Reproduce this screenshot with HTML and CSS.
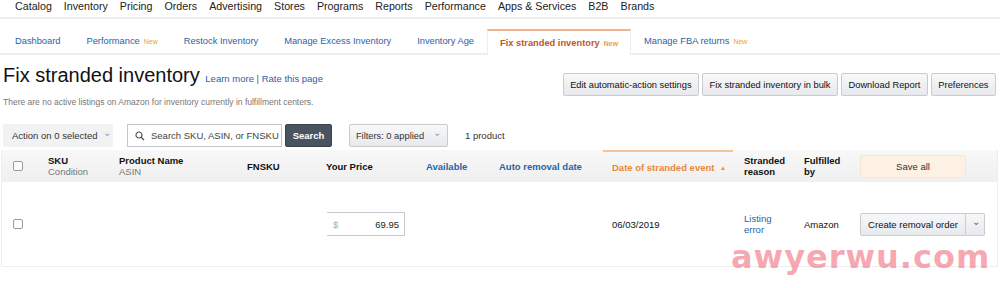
FILE: index.html
```html
<!DOCTYPE html>
<html lang="en">
<head>
  <meta charset="UTF-8">
  <title>Fix stranded inventory</title>
  <link rel="stylesheet" href="styles.css">
</head>
<body>
  <!-- top nav -->
  <nav class="topnav">
    <a>Catalog</a><a>Inventory</a><a>Pricing</a><a>Orders</a><a>Advertising</a><a>Stores</a>
    <a>Programs</a><a>Reports</a><a>Performance</a><a>Apps &amp; Services</a><a>B2B</a><a>Brands</a>
  </nav>

  <!-- tabs -->
  <div class="tabs">
    <a class="tab">Dashboard</a>
    <a class="tab">Performance <span class="new">New</span></a>
    <a class="tab">Restock Inventory</a>
    <a class="tab">Manage Excess Inventory</a>
    <a class="tab">Inventory Age</a>
    <a class="tab active">Fix stranded inventory <span class="new">New</span></a>
    <a class="tab">Manage FBA returns <span class="new">New</span></a>
  </div>

  <!-- header -->
  <div class="head">
    <div class="head-left">
      <h1>Fix stranded inventory <span class="links"><a>Learn more</a> | <a>Rate this page</a></span></h1>
      <p class="note">There are no active listings on Amazon for inventory currently in fulfillment centers.</p>
    </div>
    <div class="head-buttons">
      <button class="btn">Edit automatic-action settings</button>
      <button class="btn">Fix stranded inventory in bulk</button>
      <button class="btn">Download Report</button>
      <button class="btn">Preferences</button>
    </div>
  </div>

  <!-- toolbar -->
  <div class="toolbar">
    <div class="action">Action on 0 selected <span class="chev">&#8964;</span></div>
    <div class="search">
      <svg width="10" height="10" viewBox="0 0 10 10"><circle cx="4" cy="4" r="3" fill="none" stroke="#555" stroke-width="1.2"/><path d="M6.2 6.2 9 9" stroke="#555" stroke-width="1.3"/></svg>
      <span>Search SKU, ASIN, or FNSKU</span>
    </div>
    <button class="btn-search">Search</button>
    <button class="btn filters">Filters: 0 applied <span class="chev">&#8964;</span></button>
    <span class="count">1 product</span>
  </div>

  <!-- table -->
  <div class="table">
    <div class="row thead">
      <div class="c c-check"><span class="box"></span></div>
      <div class="c c-sku"><b>SKU</b><span class="sub">Condition</span></div>
      <div class="c c-name"><b>Product Name</b><span class="sub">ASIN</span></div>
      <div class="c c-fnsku"><b>FNSKU</b></div>
      <div class="c c-price"><b>Your Price</b></div>
      <div class="c c-avail"><b class="blue">Available</b></div>
      <div class="c c-auto"><b class="blue">Auto removal date</b></div>
      <div class="c c-date sorted"><b class="orange">Date of stranded event <span class="arrow">&#9650;</span></b></div>
      <div class="c c-reason"><b>Stranded reason</b></div>
      <div class="c c-ful"><b>Fulfilled by</b></div>
      <div class="c c-act"><button class="save">Save all</button></div>
    </div>
    <div class="row tbody">
      <div class="c c-check"><span class="box"></span></div>
      <div class="c c-sku"></div>
      <div class="c c-name"></div>
      <div class="c c-fnsku"></div>
      <div class="c c-price"><div class="price"><span class="cur">$</span><span>69.95</span></div></div>
      <div class="c c-avail"></div>
      <div class="c c-auto"></div>
      <div class="c c-date">06/03/2019</div>
      <div class="c c-reason"><a class="link">Listing error</a></div>
      <div class="c c-ful">Amazon</div>
      <div class="c c-act">
        <div class="split"><button class="split-main">Create removal order</button><button class="split-drop"><span class="chev">&#8964;</span></button></div>
      </div>
    </div>
  </div>

  <div class="watermark">awyerwu.com</div>
</body>
</html>
```

FILE: styles.css
```css
/* base */
body {
  margin: 0;
  font-family: "Liberation Sans", Arial, sans-serif;
  color: #111;
  background: #fff;
  width: 1000px;
  height: 288px;
  overflow: hidden;
  position: relative;
}

a {
  cursor: pointer;
}

/* top nav */
.topnav {
  display: flex;
  gap: 12px;
  padding-left: 15px;
  height: 17px;
  align-items: flex-start;
  font-size: 10.7px;
  line-height: 12px;
  color: #222;
  border-bottom: 2px solid #eee;
}

/* tabs */
.tabs {
  display: flex;
  margin-top: 10px;
  padding-left: 2px;
  height: 24px;
  border-bottom: 2px solid #eee;
  font-size: 9.3px;
  color: #2a62a8;
}

.tab {
  display: flex;
  align-items: center;
  padding: 0 13px;
  gap: 4px;
  white-space: nowrap;
}

.tab .new {
  color: #f0a030;
  font-size: 7px;
}

.tab.active {
  color: #c4561a;
  font-weight: bold;
  border-top: 2px solid #f0b48a;
  border-left: 1px solid #eee;
  border-right: 1px solid #eee;
  background: #fff;
  margin-bottom: -2px;
  height: 24px;
  padding: 0 12px 0 12px;
}

/* header */
.head {
  display: flex;
  justify-content: space-between;
  padding: 8px 4px 0 3px;
}

h1 {
  margin: 0;
  font-weight: normal;
  font-size: 20px;
  line-height: 24px;
  color: #111;
}

.links {
  font-size: 9.5px;
  color: #555;
}

.links a {
  color: #2a62a8;
}

.note {
  margin: 6px 0 0;
  font-size: 8.5px;
  color: #777;
}

.head-buttons {
  display: flex;
  gap: 3px;
  margin-top: 10px;
}

.btn {
  font-family: inherit;
  font-size: 9.3px;
  color: #111;
  background: linear-gradient(#f7f8fa, #e7e9ec);
  border: 1px solid #c9cbcf;
  border-radius: 2px;
  height: 23px;
  padding: 0 6.5px;
  margin: 0;
  white-space: nowrap;
}

/* toolbar */
.toolbar {
  display: flex;
  align-items: center;
  padding: 17px 0 0 3px;
  height: 23px;
}

.action {
  width: 110px;
  height: 23px;
  box-sizing: border-box;
  background: #f1f2f3;
  border-radius: 2px;
  font-size: 9.5px;
  color: #333;
  display: flex;
  align-items: center;
  padding-left: 9px;
  gap: 5px;
}

.chev {
  color: #999;
  font-size: 10px;
  position: relative;
  top: -3px;
}

.search {
  margin-left: 14px;
  width: 155px;
  height: 23px;
  box-sizing: border-box;
  border: 1px solid #c3c5c8;
  display: flex;
  align-items: center;
  gap: 6px;
  padding-left: 7px;
  font-size: 9.5px;
  color: #444;
}

.btn-search {
  margin-left: 3px;
  height: 23px;
  width: 47px;
  background: #4a5360;
  color: #fff;
  border: 1px solid #3a424d;
  border-radius: 2px;
  font-family: inherit;
  font-weight: bold;
  font-size: 9.5px;
}

.filters {
  margin-left: 17px;
  width: 99px;
  color: #333;
  display: flex;
  align-items: center;
  justify-content: center;
  gap: 9px;
}

.count {
  margin-left: 17px;
  font-size: 9.5px;
  color: #333;
}

/* table */
.table {
  margin: 3px 2px 0 1px;
  border: 1px solid #eee;
  border-top: none;
}

.row {
  display: flex;
  align-items: center;
}

.thead {
  height: 32px;
  background: linear-gradient(#f8f8f8, #efefef);
  font-size: 9.5px;
  color: #111;
}

.tbody {
  height: 84px;
  font-size: 9.5px;
  color: #111;
}

.c {
  box-sizing: border-box;
  display: flex;
  flex-direction: column;
  justify-content: center;
  height: 100%;
}

.c b {
  font-weight: bold;
}

.c .sub {
  color: #777;
}

.c-check { width: 46px; padding-left: 11px; }
.c-sku { width: 71px; }
.c-name { width: 128px; }
.c-fnsku { width: 79px; }
.c-price { width: 100px; }
.c-avail { width: 73px; }
.c-auto { width: 104px; }
.c-date { width: 130px; padding-left: 9px; }
.c-reason { width: 71px; padding-left: 11px; }
.c-ful { width: 56px; }
.c-act { flex: 1; }

.thead .c-reason b, .thead .c-ful b { width: 45px; }

.sorted {
  border-top: 2px solid #f3c59a;
}

.blue { color: #2a62a8; }
.orange { color: #e8893a; }

.arrow {
  font-size: 6px;
  margin-left: 3px;
  position: relative;
  top: -1px;
}

.box {
  width: 8px;
  height: 8px;
  border: 1px solid #999;
  border-radius: 2px;
  background: #fff;
}

.save {
  width: 106px;
  height: 23px;
  background: #fcf1e3;
  border: 1px solid #f6e6d0;
  border-radius: 2px;
  font-family: inherit;
  font-size: 9.5px;
  color: #333;
}

.price {
  width: 78px;
  height: 24px;
  box-sizing: border-box;
  border: 1px solid #c8cacd;
  border-left: none;
  display: flex;
  align-items: center;
  justify-content: space-between;
  padding: 0 5px 0 6px;
  margin-left: 1px;
  font-size: 9.5px;
  color: #222;
}

.cur { color: #aaa; }

.link {
  color: #2a62a8;
  width: 35px;
}

.split {
  display: flex;
}

.split-main, .split-drop {
  height: 23px;
  background: linear-gradient(#f7f8fa, #e7e9ec);
  border: 1px solid #c9cbcf;
  font-family: inherit;
  font-size: 9.5px;
  color: #111;
}

.split-main {
  width: 106px;
  border-radius: 2px 0 0 2px;
}

.split-drop {
  width: 19px;
  border-left: none;
  border-radius: 0 2px 2px 0;
}

.split-drop .chev { color: #666; }

/* watermark */
.watermark {
  position: absolute;
  left: 731px;
  top: 238px;
  font-family: "DejaVu Sans", sans-serif;
  font-weight: bold;
  font-size: 32px;
  letter-spacing: 1px;
  color: rgba(240, 110, 125, 0.6);
}
```
